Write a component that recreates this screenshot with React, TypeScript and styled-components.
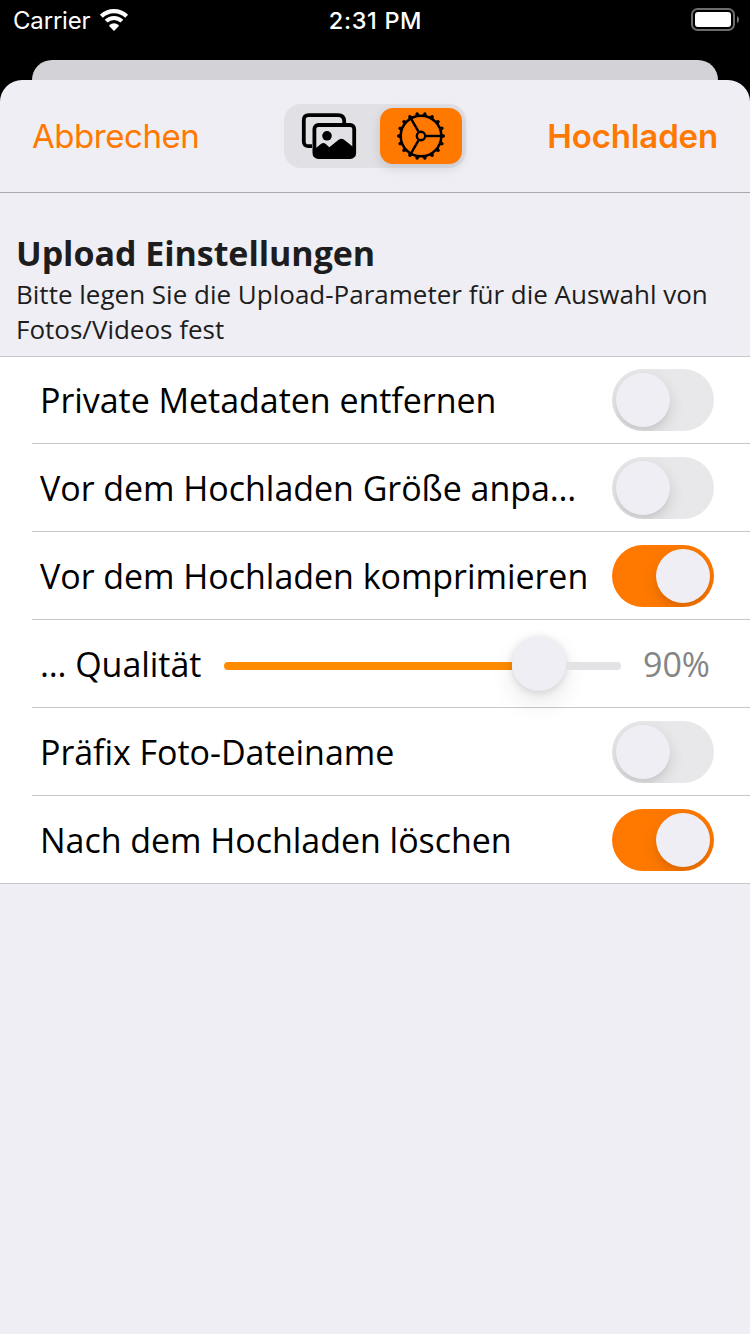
import React from "react";
import styled, { createGlobalStyle, css } from "styled-components";

const GlobalStyle = createGlobalStyle`
  *, *::before, *::after { box-sizing: border-box; }
  html, body { margin: 0; padding: 0; background: #000; }
`;

const ACCENT = "#ff7900";
const SURFACE = "#efeef4";

const Screen = styled.div`
  width: 750px;
  height: 1334px;
  display: flex;
  flex-direction: column;
  background: #000;
  overflow: hidden;
  font-family: "Open Sans", "Noto Sans", sans-serif;
`;

const StatusBar = styled.header`
  height: 60px;
  flex: none;
  display: grid;
  grid-template-columns: 1fr auto 1fr;
  align-items: start;
  padding: 6px 11px 0 13px;
  color: #fff;
  font-family: Inter, sans-serif;
  font-size: 24px;
  line-height: 30px;
`;

const Carrier = styled.div`
  display: flex;
  gap: 9px;
  letter-spacing: -0.18px;
`;

const Clock = styled.div`
  font-weight: 550;
  font-size: 23.5px;
  letter-spacing: 0.65px;
  margin-right: 1px;
`;

const Battery = styled.div`
  display: flex;
  justify-content: flex-end;
  padding-top: 2px;
`;

const BackCard = styled.div`
  height: 20px;
  flex: none;
  margin: 0 32px;
  border-radius: 20px 20px 0 0;
  background: #d3d2d7;
`;

const Sheet = styled.main`
  flex: 1;
  display: flex;
  flex-direction: column;
  border-radius: 22px 22px 0 0;
  background: ${SURFACE};
`;

const NavBar = styled.nav`
  height: 113px;
  flex: none;
  display: grid;
  grid-template-columns: 1fr 182px 1fr;
  align-items: center;
  padding: 0 32px;
  border-bottom: 1px solid #a9a8ad;
`;

const NavButton = styled.button<{ $strong?: boolean }>`
  justify-self: ${(p) => (p.$strong ? "end" : "start")};
  padding: 0;
  border: 0;
  background: none;
  color: ${ACCENT};
  font-family: Inter, sans-serif;
  font-size: 33px;
  line-height: 40px;
  font-weight: ${(p) => (p.$strong ? 600 : 400)};
  letter-spacing: ${(p) => (p.$strong ? "-0.15px" : "-0.45px")};
`;

const Segmented = styled.div`
  width: 182px;
  height: 64px;
  display: flex;
  justify-content: space-between;
  padding: 4px;
  border-radius: 17px;
  background: #e1e0e5;
`;

const Segment = styled.button<{ $selected?: boolean }>`
  width: 82px;
  height: 56px;
  display: flex;
  align-items: center;
  justify-content: center;
  padding: 0;
  border: 0;
  border-radius: 13px;
  background: none;
  ${(p) =>
    p.$selected &&
    css`
      background: ${ACCENT};
      box-shadow: 0 4px 12px rgba(0, 0, 0, 0.12);
    `}
`;

const SectionHeader = styled.section`
  height: 163px;
  flex: none;
  padding: 36px 16px 0;
  color: #1d1d20;
`;

const Title = styled.h1`
  margin: 0;
  font-size: 34px;
  line-height: 48px;
  font-weight: 700;
  letter-spacing: -0.05px;
`;

const Description = styled.p`
  margin: 0;
  font-size: 26px;
  line-height: 35px;
`;

const Table = styled.div`
  flex: none;
  border-top: 1px solid #c7c6cb;
  border-bottom: 1px solid #c7c6cb;
  padding-left: 32px;
  background: #fff;
`;

const Row = styled.div`
  height: 88px;
  display: flex;
  align-items: center;
  justify-content: space-between;
  padding: 1px 36px 0 8px;
  border-bottom: 1px solid #c7c6cb;
  &:first-child { height: 87px; padding-top: 0; }
  &:last-child { height: 87px; border-bottom: 0; padding-bottom: 0; }
`;

const Label = styled.span`
  font-size: 34px;
  line-height: 48px;
  color: #000;
  white-space: nowrap;
  letter-spacing: -0.04px;
`;

const Switch = styled.button<{ $on?: boolean }>`
  width: 102px;
  height: 62px;
  flex: none;
  display: flex;
  justify-content: ${(p) => (p.$on ? "flex-end" : "flex-start")};
  padding: 4px;
  border: 0;
  border-radius: 31px;
  overflow: hidden;
  background: ${(p) => (p.$on ? ACCENT : "#e8e8ea")};
`;

const SwitchThumb = styled.span`
  width: 54px;
  height: 54px;
  border-radius: 50%;
  background: ${SURFACE};
  box-shadow: 0 6px 16px rgba(0, 0, 0, 0.13), 0 4px 3px rgba(0, 0, 0, 0.03);
`;

const Slider = styled.div`
  width: 397px;
  height: 54px;
  margin: 0 22px 0 23px;
  flex: none;
  display: flex;
  align-items: center;
`;

const Track = styled.span<{ $filled?: boolean }>`
  height: 8px;
  margin-top: 4px;
  background: ${(p) => (p.$filled ? "#ff8c00" : "#e3e3e5")};
  width: ${(p) => (p.$filled ? "288px" : "55px")};
  border-radius: ${(p) => (p.$filled ? "4px 0 0 4px" : "0 4px 4px 0")};
`;

const SliderThumb = styled.span`
  width: 54px;
  height: 54px;
  border-radius: 50%;
  background: ${SURFACE};
  box-shadow: 0 1px 8px rgba(0, 0, 0, 0.15), 0 12px 26px rgba(0, 0, 0, 0.09);
`;

const SliderLabel = styled(Label)`
  width: 161px;
`;

const Value = styled(Label)`
  flex: 1;
  color: #858585;
`;

const WifiIcon = () => (
  <svg width="30" height="30" viewBox="0 0 30 30">
    <path d="M0.9 8.8 A20.2 20.2 0 0 1 29.1 8.8 L26.2 11.8 A16 16 0 0 0 3.8 11.8 Z" fill="#fff" />
    <path d="M5.7 13.7 A13.3 13.3 0 0 1 24.3 13.7 L21.4 16.6 A9.2 9.2 0 0 0 8.6 16.6 Z" fill="#fff" />
    <path d="M10.4 18.9 Q15 15.4 19.6 18.9 Q20 19.8 19.4 20.5 L15 24.9 L10.6 20.5 Q10 19.8 10.4 18.9 Z" fill="#fff" />
  </svg>
);

const BatteryIcon = () => (
  <svg width="48" height="23" viewBox="0 0 48 23">
    <rect x="1" y="1" width="42" height="21" rx="5.5" fill="none" stroke="#6c6c6c" strokeWidth="2" />
    <rect x="4" y="4" width="36" height="15" rx="3" fill="#fff" />
    <path d="M46 8 Q48 9.2 48 11.5 Q48 13.8 46 15 Z" fill="#777" />
  </svg>
);

const PhotosIcon = () => (
  <svg width="56" height="48" viewBox="1 0 56 48">
    <path
      d="M12 34.2 H8.6 Q3.8 34.2 3.8 29.4 V8 Q3.8 3.2 8.6 3.2 H38 Q44.2 3.2 44.2 9.4 V12"
      fill="none"
      stroke="#000"
      strokeWidth="3.8"
    />
    <rect x="14.4" y="13" width="39.8" height="32.2" rx="4" fill="none" stroke="#000" strokeWidth="3.8" />
    <circle cx="27" cy="23.8" r="4.8" fill="#000" />
    <path
      d="M14 37.5 L21.5 31.6 Q23.5 30.3 25.5 31.8 L29.3 35.3 L39 27.5 Q41.4 25.9 43.8 27.5 L54.5 36 V44 H14 Z"
      fill="#000"
    />
  </svg>
);

const TEETH = Array.from({ length: 18 }, (_, i) => i * 20);

const GearIcon = () => (
  <svg width="50" height="50" viewBox="-25 -25 50 50">
    <g fill="none" stroke="#000" strokeWidth="2.5">
      <circle r="20.3" />
      <circle r="4.2" strokeWidth="2.4" />
      {[0, 120, 240].map((a) => (
        <path key={a} d="M5 0 H20" transform={`rotate(${a})`} strokeWidth="2.4" />
      ))}
    </g>
    {TEETH.map((a) => (
      <path key={a} d="M20.8 -2.3 L23.6 -1.2 Q24.4 0 23.6 1.2 L20.8 2.3 Z" transform={`rotate(${a})`} />
    ))}
  </svg>
);

const ToggleRow = ({ label, on }: { label: string; on?: boolean }) => (
  <Row>
    <Label>{label}</Label>
    <Switch $on={on} role="switch" aria-checked={!!on} aria-label={label}>
      <SwitchThumb />
    </Switch>
  </Row>
);

export default function App() {
  return (
    <>
      <GlobalStyle />
      <Screen>
        <StatusBar>
          <Carrier>
            Carrier
            <WifiIcon />
          </Carrier>
          <Clock>2:31 PM</Clock>
          <Battery>
            <BatteryIcon />
          </Battery>
        </StatusBar>
        <BackCard />
        <Sheet>
          <NavBar>
            <NavButton>Abbrechen</NavButton>
            <Segmented>
              <Segment aria-label="Fotos">
                <PhotosIcon />
              </Segment>
              <Segment $selected aria-label="Einstellungen">
                <GearIcon />
              </Segment>
            </Segmented>
            <NavButton $strong>Hochladen</NavButton>
          </NavBar>
          <SectionHeader>
            <Title>Upload Einstellungen</Title>
            <Description>
              Bitte legen Sie die Upload-Parameter für die Auswahl von Fotos/Videos fest
            </Description>
          </SectionHeader>
          <Table>
            <ToggleRow label="Private Metadaten entfernen" />
            <ToggleRow label="Vor dem Hochladen Größe anpa…" />
            <ToggleRow label="Vor dem Hochladen komprimieren" on />
            <Row>
              <SliderLabel>… Qualität</SliderLabel>
              <Slider role="slider" aria-valuenow={90}>
                <Track $filled />
                <SliderThumb />
                <Track />
              </Slider>
              <Value>90%</Value>
            </Row>
            <ToggleRow label="Präfix Foto-Dateiname" />
            <ToggleRow label="Nach dem Hochladen löschen" on />
          </Table>
        </Sheet>
      </Screen>
    </>
  );
}
